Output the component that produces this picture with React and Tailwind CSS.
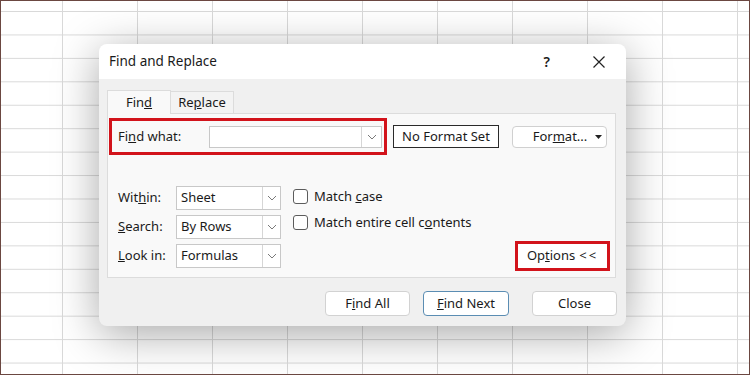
import React from "react";

const font = { fontFamily: '"Noto Sans", "Open Sans", sans-serif' };

function Chevron({ className = "" }) {
  return (
    <svg width="10" height="6" viewBox="0 0 10 6" className={className}>
      <path d="M1 1 L5 5 L9 1" fill="none" stroke="#7a7a7a" strokeWidth="1" />
    </svg>
  );
}

function Select({ value }) {
  return (
    <div className="flex h-[24px] w-[105px] items-center border border-[#c8c8c8] bg-white">
      <span className="flex-1 pl-[4px] text-[13px] text-[#1a1a1a]">{value}</span>
      <div className="flex h-full w-[18px] items-center justify-center border-l border-[#d6d6d6]">
        <Chevron />
      </div>
    </div>
  );
}

function Check({ children }) {
  return (
    <div className="flex items-center gap-[6px] text-[13px] text-[#1a1a1a]">
      <div className="h-[15px] w-[15px] rounded-[3px] border border-[#5c5c5c] bg-white" />
      <span>{children}</span>
    </div>
  );
}

function Btn({ children, className = "" }) {
  return (
    <button
      className={
        "flex h-[25px] items-center justify-center rounded-[4px] border bg-white text-[13px] text-[#1a1a1a] " +
        className
      }
    >
      {children}
    </button>
  );
}

export default function App() {
  return (
    <div
      className="relative h-[375px] w-[750px] overflow-hidden border border-[#6b4741] bg-white bg-[linear-gradient(to_right,#d9d9d9_1px,transparent_1px),linear-gradient(to_bottom,#d9d9d9_1px,transparent_1px)] bg-[size:75px_23.45px] bg-[position:61px_10px]"
      style={font}
    >
      <div className="absolute left-[98px] top-[43px] flex h-[282px] w-[527px] flex-col overflow-hidden rounded-[8px] bg-[#f0f0f0] shadow-[0_8px_45px_rgba(0,0,0,0.35)]">
        {/* title bar */}
        <div className="flex h-[35px] items-center bg-white pl-[10px] pr-[21px]">
          <span className="flex-1 text-[13.5px] text-[#1a1a1a]">Find and Replace</span>
          <span className="mr-[43px] text-[14px] font-semibold text-[#1a1a1a]">?</span>
          <svg width="12" height="12" viewBox="0 0 12 12">
            <path d="M0.5 0.5 L11.5 11.5 M11.5 0.5 L0.5 11.5" stroke="#222" strokeWidth="1.2" />
          </svg>
        </div>

        {/* tabs */}
        <div className="ml-[8px] mt-[11px] flex items-end text-[13px] text-[#1a1a1a]">
          <div className="relative z-10 -mb-px flex h-[24px] w-[64px] items-center justify-center border border-b-0 border-[#dcdcdc] bg-[#f9f9f9]">
            Fin<u>d</u>
          </div>
          <div className="flex h-[22px] w-[63px] items-center justify-center border border-b-0 border-l-0 border-[#dcdcdc] bg-[#f3f3f3]">
            Re<u>p</u>lace
          </div>
        </div>

        {/* panel */}
        <div className="ml-[8px] flex h-[165px] w-[509px] flex-col border border-[#dcdcdc] bg-[#f9f9f9] pl-px pr-[5px]">
          <div className="mt-[4px] flex items-center">
            <div className="flex h-[37px] w-[278px] items-center border-[3px] border-[#d2131b] pr-[2px]">
              <span className="w-[97px] pl-[6px] text-[13px] text-[#1a1a1a]">
                Fi<u>n</u>d what:
              </span>
              <div className="flex h-[22px] w-[173px] items-center justify-end border border-[#c8c8c8] bg-white">
                <div className="flex h-full w-[20px] items-center justify-center border-l border-[#d6d6d6]">
                  <Chevron />
                </div>
              </div>
            </div>
            <div className="ml-[6px] flex h-[23px] w-[106px] items-center justify-center border-[1.5px] border-[#2a2a2a] bg-white text-[13px] text-[#1a1a1a]">
              No Format Set
            </div>
            <div className="ml-[13px] flex h-[22px] w-[95px] items-center rounded-[4px] border border-[#d0d0d0] bg-white text-[13px] text-[#1a1a1a]">
              <span className="flex-1 pl-[12px] text-center">
                For<u>m</u>at...
              </span>
              <svg width="7" height="4" viewBox="0 0 7 4" className="mr-[4px]">
                <path d="M0 0 L7 0 L3.5 4 Z" fill="#222" />
              </svg>
            </div>
          </div>

          <div className="mt-[31px] flex items-start pl-[9px]">
            <div className="flex flex-col gap-[5px]">
              {[
                [<>Wit<u>h</u>in:</>, "Sheet"],
                [<><u>S</u>earch:</>, "By Rows"],
                [<><u>L</u>ook in:</>, "Formulas"],
              ].map(([label, value], i) => (
                <div key={i} className="flex items-center">
                  <span className="w-[58px] text-[13px] text-[#1a1a1a]">{label}</span>
                  <Select value={value} />
                </div>
              ))}
            </div>
            <div className="ml-[12px] mt-[1px] flex flex-col gap-[6px]">
              <Check>
                Match <u>c</u>ase
              </Check>
              <Check>
                Match entire cell c<u>o</u>ntents
              </Check>
            </div>
            <div className="ml-auto mt-[55px] flex h-[30px] w-[95px] items-center justify-center border-[3px] border-[#d2131b] bg-white text-[13px] text-[#1a1a1a]">
              Op<u>t</u>ions <span className="ml-[4px] tracking-[2px]">&lt;&lt;</span>
            </div>
          </div>
        </div>

        {/* buttons */}
        <div className="ml-[226px] mt-[13px] flex items-center">
          <Btn className="w-[85px] border-[#d2d2d2]">
            F<u>i</u>nd All
          </Btn>
          <Btn className="ml-[13px] w-[86px] border-[#5b8db3]">
            <u>F</u>ind Next
          </Btn>
          <Btn className="ml-[23px] w-[85px] border-[#d2d2d2]">Close</Btn>
        </div>
      </div>
    </div>
  );
}
